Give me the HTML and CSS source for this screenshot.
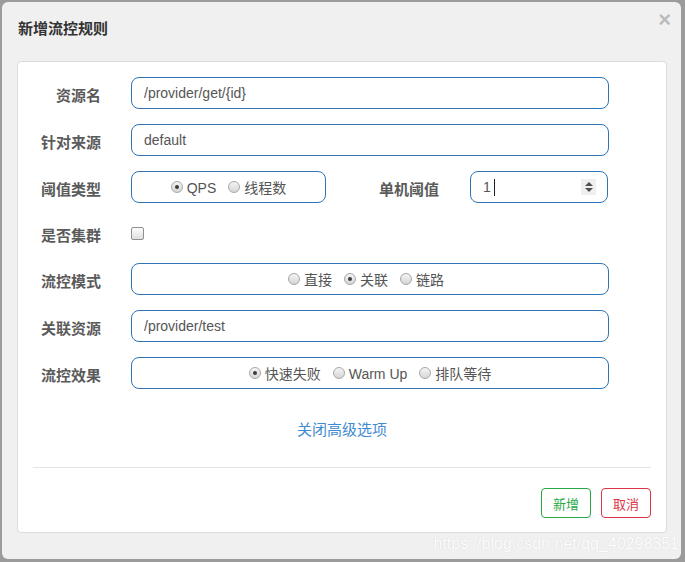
FILE: index.html
```html
<!DOCTYPE html>
<html lang="zh-CN">
<head>
<meta charset="utf-8">
<title>新增流控规则</title>
<link rel="stylesheet" href="styles.css">
</head>
<body>
<div class="modal">
  <div class="modal-header">
    <h4 class="modal-title">新增流控规则</h4>
    <span class="close">×</span>
  </div>
  <div class="card">
    <div class="form">
      <div class="row">
        <label class="label">资源名</label>
        <div class="control input">/provider/get/{id}</div>
      </div>
      <div class="row">
        <label class="label">针对来源</label>
        <div class="control input">default</div>
      </div>
      <div class="row">
        <label class="label">阈值类型</label>
        <div class="control half group">
          <span class="radio"><i class="dot checked"></i>QPS</span>
          <span class="radio"><i class="dot"></i>线程数</span>
        </div>
        <label class="label label2">单机阈值</label>
        <div class="control num input">1<span class="caret"></span>
          <span class="spin"><i class="up"></i><i class="down"></i></span>
        </div>
      </div>
      <div class="row row-check">
        <label class="label">是否集群</label>
        <span class="checkbox"></span>
      </div>
      <div class="row">
        <label class="label">流控模式</label>
        <div class="control group group-mode">
          <span class="radio"><i class="dot"></i>直接</span>
          <span class="radio"><i class="dot checked"></i>关联</span>
          <span class="radio"><i class="dot"></i>链路</span>
        </div>
      </div>
      <div class="row">
        <label class="label">关联资源</label>
        <div class="control input">/provider/test</div>
      </div>
      <div class="row">
        <label class="label">流控效果</label>
        <div class="control group">
          <span class="radio"><i class="dot checked"></i>快速失败</span>
          <span class="radio"><i class="dot"></i>Warm Up</span>
          <span class="radio"><i class="dot"></i>排队等待</span>
        </div>
      </div>
    </div>
    <div class="advanced"><a class="link">关闭高级选项</a></div>
    <div class="footer">
      <button class="btn btn-add">新增</button>
      <button class="btn btn-cancel">取消</button>
    </div>
  </div>
  <div class="watermark">https://blog.csdn.net/qq_40298351</div>
</div>
</body>
</html>
```
FILE: styles.css
```css
* { box-sizing: border-box; }
html, body { margin: 0; padding: 0; }
body {
  background: #9b9b9b;
  width: 685px;
  height: 562px;
  overflow: hidden;
  font-family: "Liberation Sans", "Noto Sans CJK SC", sans-serif;
  padding: 2px 4px 3px 2px;
}
.modal {
  position: relative;
  height: 557px;
  background: #f0f0f0;
  border-radius: 6px;
  display: flex;
  flex-direction: column;
}
.modal-header {
  position: relative;
  height: 59px;
  padding: 17px 0 0 16px;
}
.modal-title {
  margin: 0;
  font-size: 15px;
  line-height: 20px;
  font-weight: bold;
  color: #333;
}
.close {
  position: absolute;
  right: 10px;
  top: 3px;
  font-size: 22px;
  font-weight: bold;
  line-height: 30px;
  color: #000;
  opacity: 0.22;
  text-shadow: 0 1px 0 #fff;
}
.card {
  margin: 0 14px 0 15px;
  height: 472px;
  background: #fff;
  border: 1px solid #dcdcdc;
  border-radius: 4px;
  padding-top: 15px;
  display: flex;
  flex-direction: column;
}
.form {
  display: flex;
  flex-direction: column;
  gap: 15px;
}
.row {
  display: flex;
  align-items: center;
  height: 32px;
}
.row-check { height: 30px; }
.label {
  width: 83px;
  margin-right: 30px;
  padding-top: 3px;
  text-align: right;
  font-size: 15px;
  font-weight: bold;
  color: #5a5a5a;
}
.label2 {
  width: 113px;
  margin-right: 31px;
}
.control {
  width: 478px;
  height: 32px;
  border: 1px solid #2f74b5;
  border-radius: 8px;
  font-size: 14px;
  color: #555;
  display: flex;
  align-items: center;
}
.input { padding: 0 12px; }
.half { width: 195px; }
.num { width: 138px; padding-right: 11px; }
.caret {
  display: inline-block;
  width: 1px;
  height: 17px;
  background: #222;
  margin-left: 3px;
}
.spin {
  margin-left: auto;
  width: 15px;
  height: 16px;
  background: #efefef;
  display: flex;
  flex-direction: column;
  align-items: center;
  justify-content: center;
  gap: 2px;
}
.up, .down {
  width: 0;
  height: 0;
  border-left: 4px solid transparent;
  border-right: 4px solid transparent;
}
.up { border-bottom: 4px solid #505050; }
.down { border-top: 4px solid #505050; }
.group {
  justify-content: center;
  gap: 12px;
  padding-top: 2px;
}
.group-mode { padding-right: 8px; }
.radio {
  display: inline-flex;
  align-items: center;
  gap: 4px;
  line-height: 20px;
}
.dot {
  position: relative;
  width: 12px;
  height: 12px;
  margin-top: -2px;
  border-radius: 50%;
  border: 1px solid #a7a7a7;
  background: linear-gradient(#f4f4f4, #d6d6d6);
  display: inline-block;
}
.dot.checked::after {
  content: "";
  position: absolute;
  left: 3px;
  top: 3px;
  width: 4px;
  height: 4px;
  border-radius: 50%;
  background: #3c3c3c;
}
.checkbox {
  width: 13px;
  height: 13px;
  border: 1px solid #8f8f8f;
  border-radius: 2px;
  background: linear-gradient(#fdfdfd, #dedede);
}
.advanced {
  margin-top: 31px;
  text-align: center;
  line-height: 20px;
}
.link {
  font-size: 15px;
  color: #3f8bd0;
}
.footer {
  margin: 27px 15px 0 15px;
  border-top: 1px solid #e5e5e5;
  padding-top: 20px;
  display: flex;
  justify-content: flex-end;
  gap: 10px;
}
.btn {
  width: 50px;
  height: 30px;
  padding: 0;
  background: #fff;
  border-radius: 4px;
  font-family: "Liberation Sans", "Noto Sans CJK SC", sans-serif;
  font-size: 13px;
}
.btn-add { border: 1px solid #28a745; color: #28a745; }
.btn-cancel { border: 1px solid #dc3545; color: #dc3545; }
.watermark {
  position: absolute;
  right: 2px;
  bottom: 6px;
  font-size: 16px;
  line-height: 18px;
  color: #fdfdfd;
  text-shadow: 0 0 1px #cfcfcf;
}
```
